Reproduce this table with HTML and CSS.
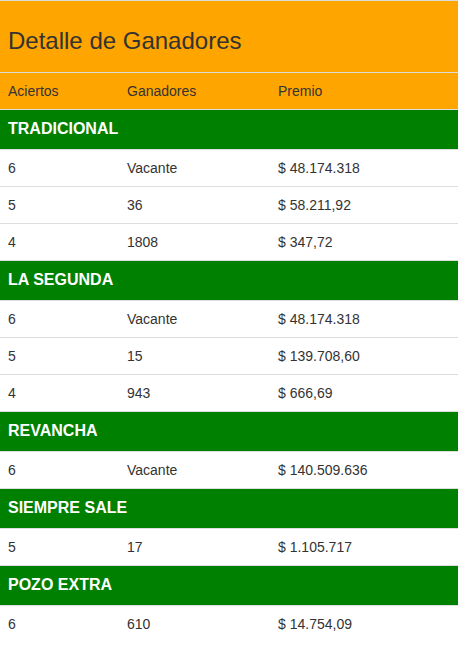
FILE: index.html
```html
<!DOCTYPE html>
<html lang="es">
<head>
<meta charset="utf-8">
<title>Detalle de Ganadores</title>
<link rel="stylesheet" href="styles.css">
</head>
<body>
<table class="tabla">
  <colgroup>
    <col class="c1">
    <col class="c2">
    <col class="c3">
  </colgroup>
  <thead>
    <tr class="titulo"><th colspan="3">Detalle de Ganadores</th></tr>
    <tr class="cabecera"><th>Aciertos</th><th>Ganadores</th><th>Premio</th></tr>
  </thead>
  <tbody>
    <tr class="juego"><th colspan="3">TRADICIONAL</th></tr>
    <tr><td>6</td><td>Vacante</td><td>$ 48.174.318</td></tr>
    <tr><td>5</td><td>36</td><td>$ 58.211,92</td></tr>
    <tr><td>4</td><td>1808</td><td>$ 347,72</td></tr>
    <tr class="juego"><th colspan="3">LA SEGUNDA</th></tr>
    <tr><td>6</td><td>Vacante</td><td>$ 48.174.318</td></tr>
    <tr><td>5</td><td>15</td><td>$ 139.708,60</td></tr>
    <tr><td>4</td><td>943</td><td>$ 666,69</td></tr>
    <tr class="juego"><th colspan="3">REVANCHA</th></tr>
    <tr><td>6</td><td>Vacante</td><td>$ 140.509.636</td></tr>
    <tr class="juego"><th colspan="3">SIEMPRE SALE</th></tr>
    <tr><td>5</td><td>17</td><td>$ 1.105.717</td></tr>
    <tr class="juego"><th colspan="3">POZO EXTRA</th></tr>
    <tr><td>6</td><td>610</td><td>$ 14.754,09</td></tr>
  </tbody>
</table>
</body>
</html>
```
FILE: styles.css
```css
html, body {
  margin: 0;
  padding: 0;
  background: #fff;
}

body {
  font-family: "Liberation Sans", Arial, sans-serif;
  font-size: 14px;
  color: #333;
}

.tabla {
  width: 458px;
  border-collapse: collapse;
  border-spacing: 0;
  table-layout: fixed;
}

.c1 { width: 119px; }
.c2 { width: 151px; }
.c3 { width: 188px; }

.tabla th,
.tabla td {
  border-top: 1px solid #ddd;
  padding: 8px;
  line-height: 20px;
  text-align: left;
  vertical-align: top;
  font-weight: normal;
}

.titulo th {
  background: #ffa500;
  font-size: 24px;
  line-height: 26px;
  padding: 27px 8px 18px 8px;
  color: #333;
}

.cabecera th {
  background: #ffa500;
}

.juego th {
  background: #008000;
  color: #fff;
  font-size: 16px;
  font-weight: bold;
  line-height: 23px;
  padding: 7px 8px 9px 8px;
}
```
